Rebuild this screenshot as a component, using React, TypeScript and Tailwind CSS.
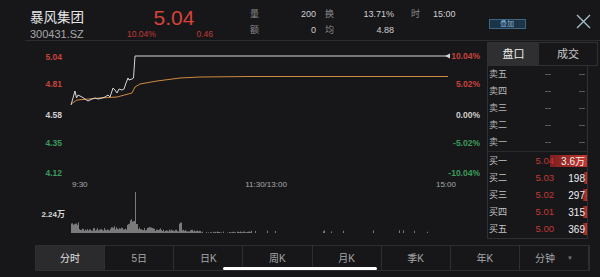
import React from 'react';

const FONT = { fontFamily: '"Liberation Sans", "Noto Sans CJK SC", sans-serif' };

const pricePts = [
  [71, 105], [75, 91], [76.5, 98], [78, 95], [82, 97], [85, 99], [88, 101], [92, 99], [95, 98],
  [98, 99], [102, 98], [105, 97], [108, 95], [110, 97], [113, 88], [115, 90], [117, 93], [119, 89],
  [122, 90], [124, 89], [126, 83], [128, 78], [129, 80], [132, 79], [133.5, 78], [135, 56], [446, 56],
];

const avgPts = [
  [71, 104], [77, 100], [100, 98], [117, 97], [132, 93], [135, 87], [140, 84], [157, 81],
  [180, 78], [200, 77], [250, 76.5], [448, 76.5],
];

const toPath = (pts: number[][]) => pts.map((p, i) => `${i ? 'L' : 'M'}${p[0]} ${p[1]}`).join(' ');

function volumeBars() {
  let s = 7;
  const rnd = () => (s = (s * 9301 + 49297) % 233280) / 233280;
  const bars: string[] = [];
  for (let x = 71; x < 452; x++) {
    let h = 0;
    if (x <= 78) h = 8 + rnd() * 3;
    else if (x <= 110) h = 2 + rnd() * 3;
    else if (x <= 114) h = 5 + rnd() * 2;
    else if (x <= 126) h = 3 + rnd() * 3;
    else if (x <= 129) h = 8 + rnd() * 2;
    else if (x <= 134) h = 10 + rnd() * 4;
    else if (x === 135) h = 41;
    else if (x <= 137) h = 9;
    else if (x <= 160) h = 2 + rnd() * 4;
    else if (x <= 178) h = 1.5 + rnd() * 2;
    else if (x <= 181) h = 9 + rnd() * 2;
    else if (x <= 200) h = 1.5 + rnd() * 2;
    else if (x <= 250) h = rnd() * 1.6;
    else h = rnd() > 0.93 ? 1 + rnd() * 2 : 0;
    if (h > 0.4) bars.push(`M${x + 0.5} 233 V${(233 - h).toFixed(1)}`);
  }
  return bars.join(' ');
}

const leftLabels = [
  { t: '5.04', y: 60, c: '#c8423b' },
  { t: '4.81', y: 87, c: '#c8423b' },
  { t: '4.58', y: 118, c: '#cfcfcf' },
  { t: '4.35', y: 146, c: '#3c9b5c' },
  { t: '4.12', y: 176, c: '#3c9b5c' },
];
const rightLabels = [
  { t: '10.04%', y: 59, c: '#c8423b' },
  { t: '5.02%', y: 87, c: '#c8423b' },
  { t: '0.00%', y: 118, c: '#cfcfcf' },
  { t: '-5.02%', y: 146, c: '#3c9b5c' },
  { t: '-10.04%', y: 176, c: '#3c9b5c' },
];

const sells = ['卖五', '卖四', '卖三', '卖二', '卖一'];
const buys = [
  { l: '买一', p: '5.04', v: '3.6万', w: 37 },
  { l: '买二', p: '5.03', v: '198', w: 3 },
  { l: '买三', p: '5.02', v: '297', w: 4 },
  { l: '买四', p: '5.01', v: '315', w: 4 },
  { l: '买五', p: '5.00', v: '369', w: 4 },
];

const tabs = ['分时', '5日', '日K', '周K', '月K', '季K', '年K', '分钟'];

function Chart() {
  return (
    <svg width="487" height="199" viewBox="0 41 487 199" className="block shrink-0" style={FONT}>
      {leftLabels.map((l) => (
        <text key={l.t} x="62" y={l.y} textAnchor="end" fontSize="8.5" fontWeight="600" fill={l.c}>
          {l.t}
        </text>
      ))}
      {rightLabels.map((l) => (
        <text key={l.t} x="480" y={l.y} textAnchor="end" fontSize="8.5" fontWeight="600" fill={l.c}>
          {l.t}
        </text>
      ))}
      <path d={toPath(avgPts)} fill="none" stroke="#cf8a3e" strokeWidth="1" />
      <path d={toPath(pricePts)} fill="none" stroke="#d6d6d6" strokeWidth="1" strokeLinejoin="round" />
      <polygon points="445,56 450,53.5 450,58.5" fill="#d6d6d6" />
      <text x="72" y="187" fontSize="8" fill="#a8a8a8">9:30</text>
      <text x="266" y="187" fontSize="8" fill="#a8a8a8" textAnchor="middle">11:30/13:00</text>
      <text x="456" y="187" fontSize="8" fill="#a8a8a8" textAnchor="end">15:00</text>
      <text x="65" y="217" fontSize="8" fontWeight="600" fill="#d8d8d8" textAnchor="end">2.24万</text>
      <path d={volumeBars()} stroke="#7a7a7a" strokeWidth="1" />
    </svg>
  );
}

function OrderBook() {
  return (
    <div className="w-[111px] shrink-0 pt-[1px]">
      <div className="flex h-[24px] border border-[#303033] text-[11px]">
        <div className="w-[51px] bg-[#2f2f32] text-[#eeeeee] flex items-center justify-center">盘口</div>
        <div className="flex-1 text-[#c8c8c8] flex items-center justify-center">成交</div>
      </div>
      <div className="w-[101px] border-x border-b border-[#303033]">
        {sells.map((s) => (
          <div key={s} className="h-[17px] flex items-center text-[9px]">
            <span className="w-[22px] pl-[1px] text-[#b8b8b8]">{s}</span>
            <span className="w-[42px] text-right pr-[1px] text-[#8a8a8a]">--</span>
            <span className="flex-1 text-right pr-[2px] text-[#8a8a8a]">--</span>
          </div>
        ))}
        <div className="border-t border-[#2a2a2d] pt-[1px]">
          {buys.map((b) => (
            <div key={b.l} className="relative h-[17px] flex items-center text-[9.5px]">
              <div
                className="absolute right-0 top-[2px] bottom-[3px] bg-linear-to-r from-[#7a2020] to-[#c4372f]"
                style={{ width: b.w }}
              />
              <span className="relative w-[22px] pl-[1px] text-[9px] text-[#c4c4c4]">{b.l}</span>
              <span className="relative w-[44px] text-right text-[#c23a33]">{b.p}</span>
              <span className="relative flex-1 text-right pr-[2px] text-[#f0f0f0] text-[10px]">{b.v}</span>
            </div>
          ))}
        </div>
      </div>
    </div>
  );
}

export default function App() {
  return (
    <div className="relative w-[600px] h-[277px] bg-[#17171a] overflow-hidden" style={FONT}>
      <div className="flex h-[41px] ml-[25px] border-b border-[#2c2c2f]">
        <div className="w-[100px] pl-[5px]">
          <div className="mt-[10px] text-[13.5px] leading-[16px] text-[#e6e6e6]">暴风集团</div>
          <div className="mt-[2px] text-[11px] leading-[13px] text-[#a8a8a8]">300431.SZ</div>
        </div>
        <div className="w-[98px]">
          <div className="mt-[6px] text-[21px] leading-[23px] text-[#d8423a] text-center">5.04</div>
          <div className="flex justify-between pl-[2px] pr-[10px] text-[8.5px] leading-[10px] text-[#c23a33]">
            <span>10.04%</span>
            <span>0.46</span>
          </div>
        </div>
        <div className="ml-[27px] w-[66px] pt-[6px] text-[9px]">
          <div className="flex justify-between h-[16px] leading-[16px]">
            <span className="text-[#8a8a8a]">量</span>
            <span className="text-[#d0d0d0]">200</span>
          </div>
          <div className="flex justify-between h-[16px] leading-[16px]">
            <span className="text-[#8a8a8a]">额</span>
            <span className="text-[#d0d0d0]">0</span>
          </div>
        </div>
        <div className="ml-[9px] w-[69px] pt-[6px] text-[9px]">
          <div className="flex justify-between h-[16px] leading-[16px]">
            <span className="text-[#8a8a8a]">换</span>
            <span className="text-[#d0d0d0]">13.71%</span>
          </div>
          <div className="flex justify-between h-[16px] leading-[16px]">
            <span className="text-[#8a8a8a]">均</span>
            <span className="text-[#d0d0d0]">4.88</span>
          </div>
        </div>
        <div className="ml-[17px] pt-[6px] text-[9px] flex gap-[13px] h-[22px] leading-[16px]">
          <span className="text-[#8a8a8a]">时</span>
          <span className="text-[#d0d0d0]">15:00</span>
        </div>
        <div className="ml-[33px] mt-[19px] w-[37px] h-[10px] border border-[#3f6584] bg-[#1c3448] text-[7px] leading-[8px] text-[#8ab8da] flex items-center justify-center">
          叠加
        </div>
        <svg width="15" height="15" viewBox="0 0 15 15" className="ml-[50px] mt-[14px]">
          <path d="M1 1 L14 14 M14 1 L1 14" stroke="#a6c3cc" strokeWidth="1.3" />
        </svg>
      </div>
      <div className="flex">
        <Chart />
        <OrderBook />
      </div>
      <div className="ml-[35px] mt-[5px] w-[555px] h-[26px] grid grid-cols-8 border border-[#2e2e31] text-[10px]">
        {tabs.map((t, i) => (
          <div
            key={t}
            className={
              'flex items-center justify-center border-r border-[#2e2e31] ' +
              (i === 0 ? 'bg-[#2b2b2e] text-[#e0e0e0]' : 'text-[#a8a8a8]')
            }
          >
            {t}
            {i === 7 && <span className="ml-[12px] text-[6px] text-[#777]">▼</span>}
          </div>
        ))}
      </div>
      <div className="absolute left-[223px] bottom-[7px] w-[154px] h-[3px] rounded-full bg-white" />
    </div>
  );
}
